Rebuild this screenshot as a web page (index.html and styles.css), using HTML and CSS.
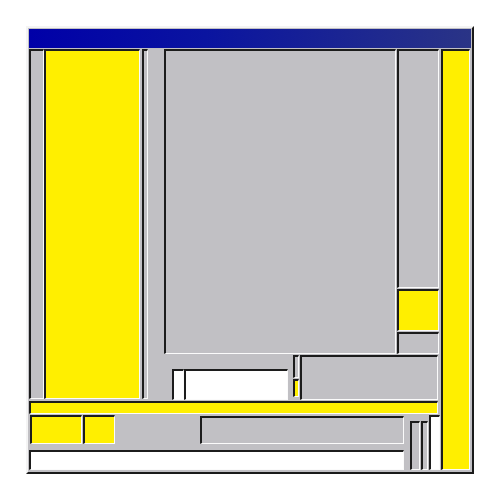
FILE: index.html
```html
<!DOCTYPE html>
<html>
<head>
<meta charset="utf-8">
<link rel="stylesheet" href="styles.css">
</head>
<body>
<div class="win">
  <div class="title"></div>
  <div class="content">
    <div class="main">
      <div class="upper">
        <div class="sk gray thin1"></div>
        <div class="sk yellow yl"></div>
        <div class="sk gray thin2"></div>
        <div class="center">
          <div class="ctop">
            <div class="sk gray big"></div>
            <div class="rcol">
              <div class="sk gray rg1"></div>
              <div class="sk yellow ry"></div>
              <div class="sk gray rg2"></div>
            </div>
          </div>
          <div class="cbot">
            <div class="warea">
              <div class="sk white wb1"></div>
              <div class="sk white wb2"></div>
            </div>
            <div class="scol">
              <div class="sk gray sg"></div>
              <div class="sk yellow sy"></div>
            </div>
            <div class="sk gray bpanel"></div>
          </div>
        </div>
      </div>
      <div class="sk yellow ybar"></div>
      <div class="lower">
        <div class="lleft">
          <div class="row3">
            <div class="sk yellow yb1"></div>
            <div class="sk yellow yb2"></div>
            <div class="sk gray r3panel"></div>
          </div>
          <div class="sk white wbar"></div>
        </div>
        <div class="bars">
          <div class="sk gray bar1"></div>
          <div class="sk gray bar2"></div>
          <div class="sk white bar3"></div>
        </div>
      </div>
    </div>
    <div class="sk yellow rycol"></div>
  </div>
</div>
</body>
</html>
```

FILE: styles.css
```css
* { box-sizing: border-box; }
html, body { margin: 0; padding: 0; background: #fff; }
body { padding: 26px 0 0 26px; font-family: "Liberation Sans", sans-serif; }

.win {
  width: 448px; height: 448px;
  background: #c1c0c4;
  border: 2px solid;
  border-color: #f4f4f4 #1a1a1a #1a1a1a #f4f4f4;
  padding: 1px;
  display: flex; flex-direction: column;
}
.title {
  height: 19px;
  background: linear-gradient(to right, #0000a8, #0a14a0 40%, #2a3486);
}
.content { display: flex; height: 422px; }

.sk {
  border-style: solid;
  border-width: 2px 1px 1px 2px;
  border-color: #1c1c1c #fbfbfb #fbfbfb #1c1c1c;
}
.gray { background: #c1c0c4; }
.yellow { background: #ffef00; }
.white { background: #fff; }

.main { width: 411px; display: flex; flex-direction: column; }
.rycol { width: 29px; margin: 1px 0 0 1px; height: 421px; }

.upper { height: 352px; display: flex; }
.thin1 { width: 15px; margin: 1px 0; }
.yl { width: 96px; margin: 1px 0; }
.thin2 { width: 6px; margin: 1px 0 1px 2px; }
.center { width: 276px; margin-left: 16px; display: flex; flex-direction: column; }

.ctop { height: 306px; display: flex; }
.big { width: 232px; margin-top: 1px; }
.rcol { width: 44px; display: flex; flex-direction: column; }
.rcol .sk { width: 42px; margin-left: 1px; }
.rg1 { height: 239px; margin-top: 1px; }
.ry { height: 42px; margin-top: 1px; }
.rg2 { height: 22px; margin-top: 1px; }

.cbot { height: 46px; display: flex; }
.warea { width: 128px; display: flex; align-items: flex-end; padding: 0 0 0 8px; }
.wb1 { width: 12px; height: 31px; }
.wb2 { width: 104px; height: 31px; }
.scol { width: 6px; margin-left: 1px; display: flex; flex-direction: column; }
.sg { height: 23px; margin-top: 1px; }
.sy { height: 18px; margin-top: 1px; }
.bpanel { width: 138px; margin: 1px 0 0 1px; height: 45px; }

.ybar { height: 13px; margin-top: 1px; width: 409px; }

.lower { height: 56px; display: flex; }
.lleft { width: 375px; display: flex; flex-direction: column; }
.row3 { height: 36px; display: flex; align-items: flex-start; }
.yb1 { width: 52px; height: 29px; margin: 1px 0 0 1px; }
.yb2 { width: 32px; height: 29px; margin: 1px 0 0 1px; }
.r3panel { width: 204px; height: 28px; margin: 2px 0 0 auto; }
.wbar { height: 20px; }

.bars { width: 36px; display: flex; align-items: flex-end; padding-left: 6px; }
.bar1 { width: 10px; height: 49px; }
.bar2 { width: 7px; height: 49px; margin-left: 1px; }
.bar3 { width: 11px; height: 55px; margin-left: 1px; }
```
